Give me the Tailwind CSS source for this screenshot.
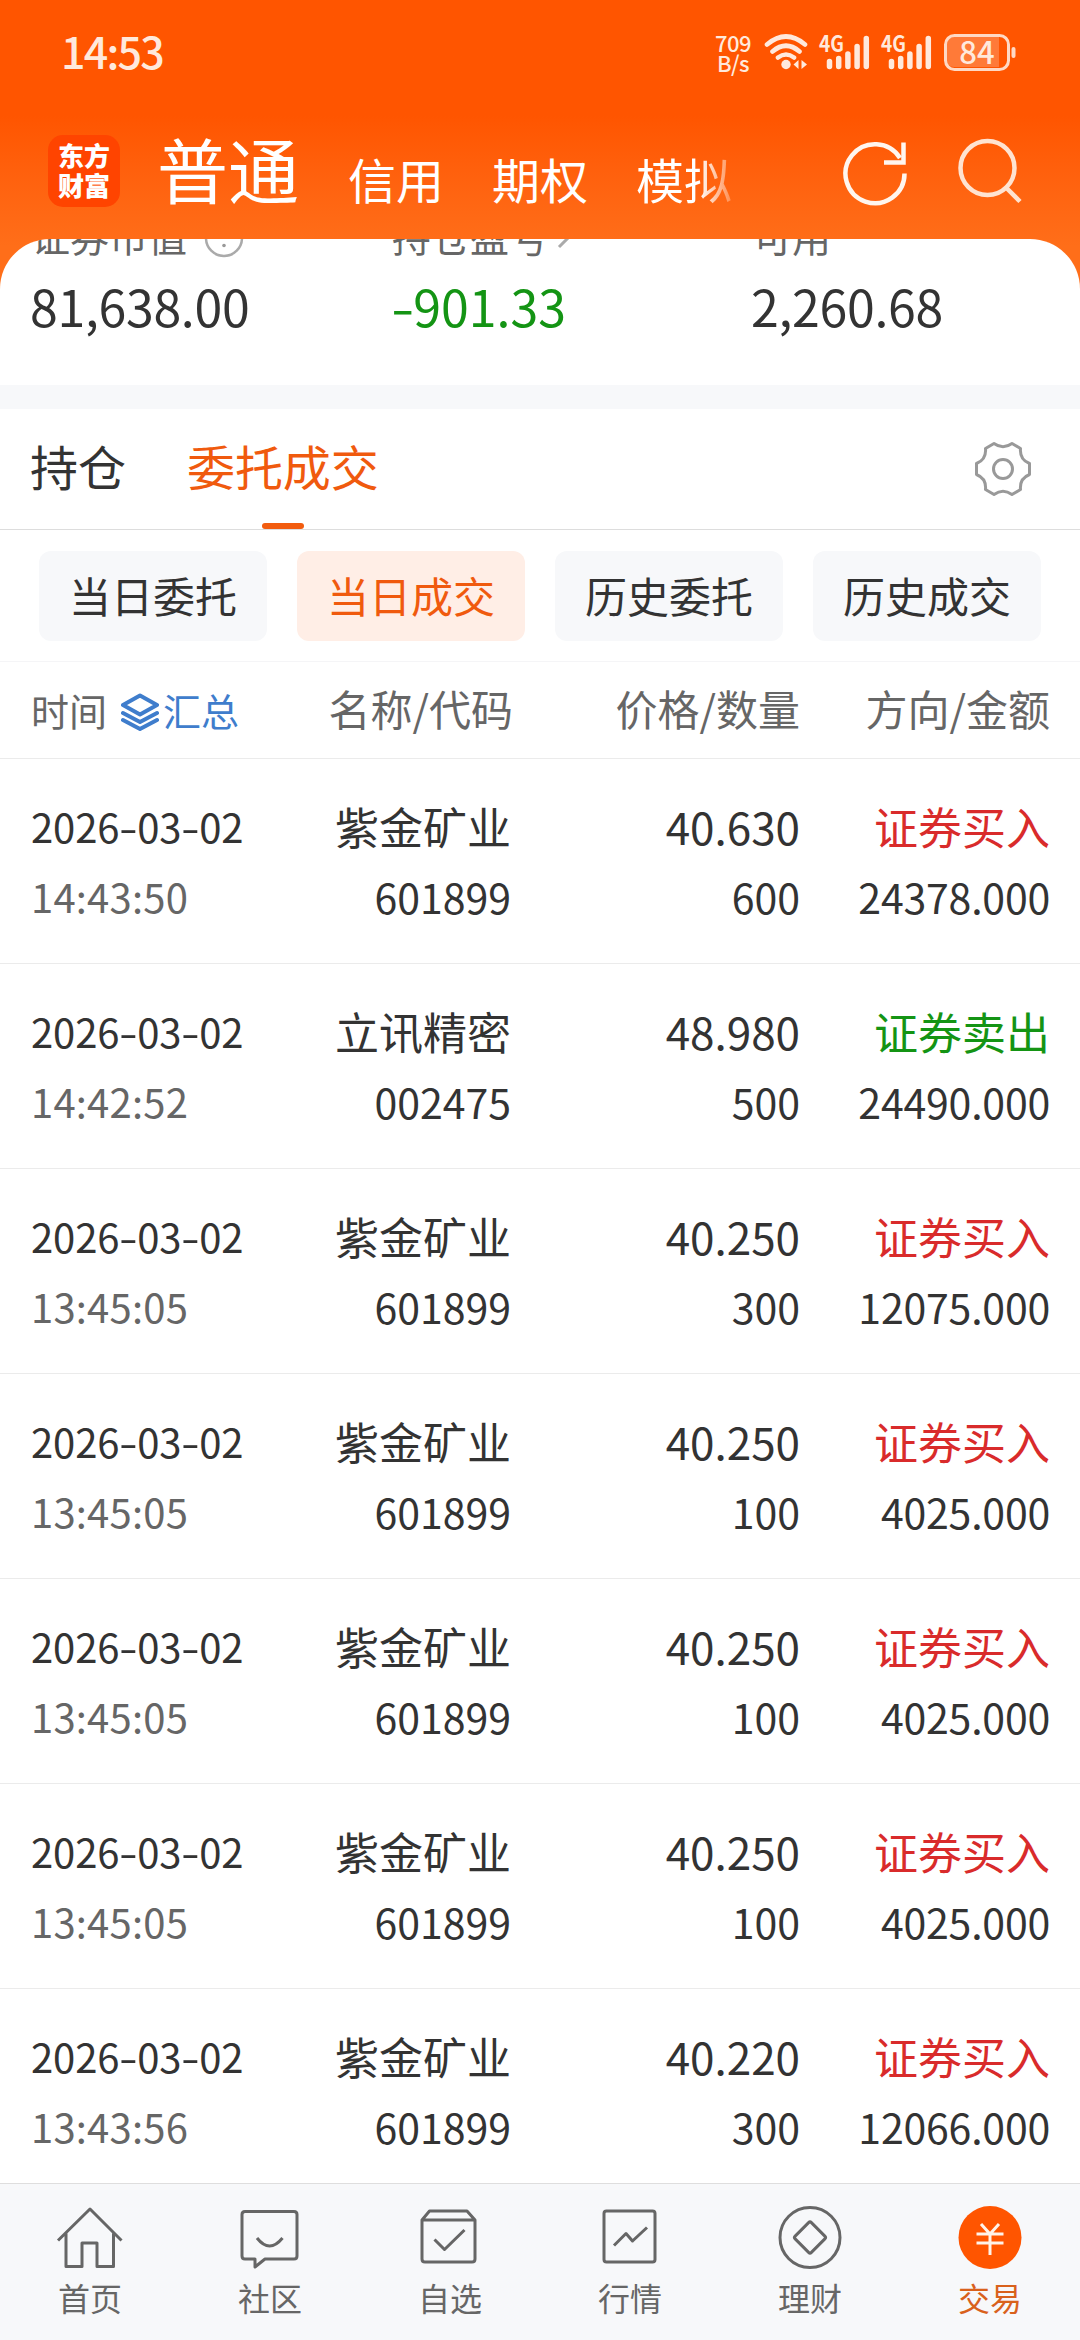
<!DOCTYPE html>
<html lang="zh-CN">
<head>
    <meta charset="UTF-8">
    <meta name="viewport" content="width=device-width, initial-scale=1.0">
    <title>当日成交</title>
    <script src="https://cdn.jsdelivr.net/npm/@tailwindcss/browser@4"></script>
</head>
<body class="w-[1080px] h-[2340px] overflow-hidden flex flex-col bg-white text-[#333333] font-['Noto_Sans_CJK_SC',sans-serif]">
    <!-- Status bar + account tabs -->
    <header class="h-[290px] shrink-0 bg-linear-to-b from-[#ff5500] from-40% to-[#ff6e19] to-85%">
        <div class="h-[106px] flex items-center justify-between pl-[61px] pr-[63px] text-[#ffe9dc]">
            <div class="-mt-[5px] text-[43px] font-medium leading-none tracking-[-1.8px]">14:53</div>
            <div class="-mt-[2px] flex items-center">
                <div class="w-[38px] text-center text-[22px] font-medium leading-[20px] tracking-[-0.6px]">
                    <div>709</div>
                    <div>B/s</div>
                </div>
                <svg class="ml-[12px]" width="44" height="38" viewBox="0 0 44 38" fill="none" stroke="#ffe9dc" stroke-width="4.6" stroke-linecap="round">
                    <path d="M3 11.5Q22 -4.500 41 11.500M8.500 18.500Q22 7 35.500 18.500M14 24.500Q22 18.500 30 24.500"/>
                    <circle cx="22" cy="31.500" r="4.700" fill="#ffe9dc" stroke="none"/>
                    <path d="M34.500 27v9l-5-4.500zM37.500 27v9l5.500-4.500z" fill="#ffe9dc" stroke="none"/>
                </svg>
                <svg class="ml-[11px] overflow-visible" width="52" height="38" viewBox="0 0 52 38" fill="#ffe9dc">
                    <text x="0" y="18.500" font-size="22" font-weight="700" textLength="25" lengthAdjust="spacingAndGlyphs">4G</text>
                    <path d="M10.500 28.500v5M19.700 25.500v8M28.900 21v12.500M38.100 13.500v20M47.300 5.500v28" stroke="#ffe9dc" stroke-width="5.500" stroke-linecap="round"/>
                </svg>
                <svg class="ml-[10px] overflow-visible" width="52" height="38" viewBox="0 0 52 38" fill="#ffe9dc">
                    <text x="0" y="18.500" font-size="22" font-weight="700" textLength="25" lengthAdjust="spacingAndGlyphs">4G</text>
                    <path d="M10.500 28.500v5M19.700 25.500v8M28.900 21v12.500M38.100 13.500v20M47.300 5.500v28" stroke="#ffe9dc" stroke-width="5.500" stroke-linecap="round"/>
                </svg>
                <svg class="ml-[9px] overflow-visible" width="75" height="38" viewBox="0 0 75 38">
                    <path d="M12 4h45v30h-45a8 8 0 0 1-8-8v-14a8 8 0 0 1 8-8z" fill="#ff7a38"/>
                    <rect x="3.500" y="2.500" width="63" height="34" rx="9" fill="none" stroke="#ffd9c4" stroke-width="3"/>
                    <path d="M71.500 16v7" stroke="#ffd9c4" stroke-width="4" stroke-linecap="round"/>
                    <text x="35" y="31" font-size="31" font-weight="500" text-anchor="middle" fill="#ffe9dc">84</text>
                </svg>
            </div>
        </div>
        <div class="h-[132px] flex items-start pl-[48px] text-white">
            <div class="mt-[29px] size-[72px] rounded-[15px] bg-[#ff4400] flex flex-col items-center justify-center pb-[2px] font-black text-[26px] leading-[30px]">
                <div>东方</div>
                <div>财富</div>
            </div>
            <div class="ml-[37px] mt-[21px] text-[71px] leading-[80px]">普通</div>
            <div class="ml-[49px] mt-[44px] flex gap-[48px] text-[48px] leading-[56px]">
                <div>信用</div>
                <div>期权</div>
                <div class="bg-linear-to-r from-white from-65% to-[#ff8b4a] bg-clip-text text-transparent">模拟</div>
            </div>
            <svg class="ml-[110px] mt-[32px]" width="68" height="68" viewBox="0 0 68 68" fill="none" stroke="#fff6ef" stroke-width="4.500">
                <path d="M62.500 35.500A29.500 29.500 0 1 1 58 20"/>
                <path d="M61.500 4.500V24.500H42"/>
            </svg>
            <svg class="ml-[46px] mt-[32px]" width="68" height="68" viewBox="0 0 68 68" fill="none" stroke="#ffe3d1" stroke-width="4.500">
                <circle cx="31.500" cy="30" r="27"/>
                <path d="M50.500 50L64 63.500"/>
            </svg>
        </div>
    </header>

    <!-- Asset summary, scrolled under the header -->
    <section class="relative z-10 -mt-[51px] h-[146px] shrink-0 overflow-hidden rounded-t-[50px] bg-white">
        <div class="-mt-[29px] grid grid-cols-[361px_361px_1fr] pl-[31px] text-[39px] leading-[50px] text-[#666666]">
            <div class="flex items-center">
                <span>证券市值</span>
                <svg class="ml-[17px] mt-[5px]" width="40" height="40" viewBox="0 0 40 40" fill="none" stroke="#aaaaaa" stroke-width="2.500">
                    <circle cx="20" cy="20" r="18"/>
                    <path d="M20 9v12" stroke-width="3"/>
                    <circle cx="20" cy="27.500" r="1.800" fill="#999999" stroke="none"/>
                </svg>
            </div>
            <div class="flex items-center">
                <span>持仓盈亏</span>
                <svg class="ml-[9px]" width="16" height="30" viewBox="0 0 16 30" fill="none" stroke="#aaaaaa" stroke-width="3">
                    <path d="M2 3l12 12L2 27"/>
                </svg>
            </div>
            <div>可用</div>
        </div>
        <div class="mt-[15px] grid grid-cols-[361px_361px_1fr] pl-[30px] text-[50px] leading-[60px]">
            <div class="tracking-[-0.3px]">81,638.00</div>
            <div class="text-[#149414]"><span class="mr-[5px] inline-block origin-left scale-x-135">-</span>901.33</div>
            <div class="-ml-[1px] tracking-[-0.3px]">2,260.68</div>
        </div>
    </section>
    <div class="h-[24px] shrink-0 bg-[#f7f8fa]"></div>

    <!-- Section tabs -->
    <nav class="h-[121px] shrink-0 flex items-stretch border-b border-[#dddddd] pl-[30px] pr-[49px] text-[48px] leading-[113px]">
        <div>持仓</div>
        <div class="relative ml-[61px] text-[#f05a0e] tracking-[-0.1px]">
            委托成交
            <div class="absolute bottom-0 left-[75px] h-[6px] w-[42px] rounded-full bg-[#f25c0f]"></div>
        </div>
        <svg class="ml-auto mt-[32px]" width="56" height="56" viewBox="0 0 56 56" fill="none" stroke="#999999" stroke-width="3" stroke-linejoin="round">
            <path d="M19 2.500Q28 9 37 2.500L45.500 7.500Q44.500 18.500 54.500 22.500V33.500Q44.500 37.500 45.500 48.500L37 53.500Q28 47 19 53.500L10.500 48.500Q11.500 37.500 1.500 33.500V22.500Q11.500 18.500 10.500 7.500Z"/>
            <circle cx="28" cy="28" r="9.500"/>
        </svg>
    </nav>

    <!-- Filter buttons -->
    <div class="h-[132px] shrink-0 flex gap-[30px] border-b border-[#f5f5f7] px-[39px] pt-[21px] text-center text-[42px] leading-[87px]">
        <div class="h-[90px] w-[228px] rounded-xl bg-[#f7f8fa]">当日委托</div>
        <div class="h-[90px] w-[228px] rounded-xl bg-[#ffeee6] text-[#f05a0e]">当日成交</div>
        <div class="h-[90px] w-[228px] rounded-xl bg-[#f7f8fa]">历史委托</div>
        <div class="h-[90px] w-[228px] rounded-xl bg-[#f7f8fa]">历史成交</div>
    </div>

    <!-- Table head -->
    <div class="h-[97px] shrink-0 grid grid-cols-[212px_270px_287px_250px] border-b border-[#ebebeb] pl-[31px] text-right text-[42px] leading-[92px] text-[#666666]">
        <div class="flex items-center whitespace-nowrap text-[38px]">
            <span>时间</span>
            <svg class="ml-[14px] mt-[4px]" width="38" height="38" viewBox="0 0 38 38" fill="none" stroke="#3f7dcc" stroke-width="4" stroke-linejoin="round" stroke-linecap="round">
                <path d="M19 2.500L36 12L19 21.500L2 12ZM2 20L19 29L36 20M2 27L19 36L36 27"/>
            </svg>
            <span class="ml-[4px] text-[#3f7dcc]">汇总</span>
        </div>
        <div>名称/代码</div>
        <div>价格/数量</div>
        <div>方向/金额</div>
    </div>

    <!-- Trade rows -->
    <main id="trades" class="min-h-0 flex-1 overflow-hidden"></main>

    <!-- Bottom bar -->
    <footer class="h-[157px] shrink-0 grid grid-cols-6 border-t border-[#dedede] bg-[#f7f8fa] pt-[20px] text-center text-[32px] leading-[36px] text-[#666666]">
        <div class="flex flex-col items-center">
            <svg width="68" height="68" viewBox="0 0 68 68" fill="none" stroke="#666666" stroke-width="3" stroke-linejoin="round">
                <path d="M2 36.500L34 5L65.500 36.500M10 29.500V62.500H26V39H41V62.500H57.500V29.500"/>
            </svg>
            <div class="mt-[7px]">首页</div>
        </div>
        <div class="flex flex-col items-center">
            <svg width="68" height="68" viewBox="0 0 68 68" fill="none" stroke="#666666" stroke-width="3" stroke-linejoin="round">
                <path d="M9 7.500H58Q61 7.500 61 10.500V52Q61 55 58 55H29L19 63V55H9Q6 55 6 52V10.500Q6 7.500 9 7.500Z"/>
                <path d="M21 34Q33.500 50 46.500 34"/>
            </svg>
            <div class="mt-[7px]">社区</div>
        </div>
        <div class="flex flex-col items-center">
            <svg width="68" height="68" viewBox="0 0 68 68" fill="none" stroke="#666666" stroke-width="3" stroke-linejoin="round">
                <path d="M6 16L13.500 7H51L59 16V55Q59 58 56 58H9Q6 58 6 55ZM6 16H59"/>
                <path d="M18.500 35.500L28.500 45.500L48.500 26"/>
            </svg>
            <div class="mt-[7px]">自选</div>
        </div>
        <div class="flex flex-col items-center">
            <svg width="68" height="68" viewBox="0 0 68 68" fill="none" stroke="#666666" stroke-width="3" stroke-linejoin="round">
                <rect x="8" y="7" width="51" height="51" rx="2.500"/>
                <path d="M18 41.500L30 29.500L36.500 37L51 23.500"/>
            </svg>
            <div class="mt-[7px]">行情</div>
        </div>
        <div class="flex flex-col items-center">
            <svg width="68" height="68" viewBox="0 0 68 68" fill="none" stroke="#666666" stroke-width="3" stroke-linejoin="round">
                <circle cx="34" cy="33.500" r="30"/>
                <rect x="22.500" y="22" width="23" height="23" rx="2" transform="rotate(45 34 33.500)"/>
            </svg>
            <div class="mt-[7px]">理财</div>
        </div>
        <div class="flex flex-col items-center text-[#d9611c]">
            <svg width="68" height="68" viewBox="0 0 68 68" fill="none" stroke="#fff3ea" stroke-width="3">
                <circle cx="34" cy="33.500" r="31.500" fill="#ff5500" stroke="none"/>
                <path d="M25 20L34 30L43 20M20.500 30H47.500M20.500 39H47.500M34 30V51"/>
            </svg>
            <div class="mt-[7px]">交易</div>
        </div>
    </footer>

    <script>
        const trades = [
            ['14:43:50', '紫金矿业', '601899', '40.630', '600', '证券买入', '24378.000'],
            ['14:42:52', '立讯精密', '002475', '48.980', '500', '证券卖出', '24490.000'],
            ['13:45:05', '紫金矿业', '601899', '40.250', '300', '证券买入', '12075.000'],
            ['13:45:05', '紫金矿业', '601899', '40.250', '100', '证券买入', '4025.000'],
            ['13:45:05', '紫金矿业', '601899', '40.250', '100', '证券买入', '4025.000'],
            ['13:45:05', '紫金矿业', '601899', '40.250', '100', '证券买入', '4025.000'],
            ['13:43:56', '紫金矿业', '601899', '40.220', '300', '证券买入', '12066.000']
        ];
        const dash = '<span class="mr-[4px] inline-block origin-left scale-x-135">-</span>';

        document.getElementById('trades').innerHTML = trades.map(([time, name, code, price, count, side, amount]) => `
            <div class="h-[205px] grid grid-cols-[212px_268px_289px_250px] border-b border-[#ebebeb] pl-[31px] pt-[32px] text-right text-[41px] leading-[70px]">
                <div class="text-left text-[40px] whitespace-nowrap">
                    <div class="tracking-[-0.1px]">2026${dash}03${dash}02</div>
                    <div class="tracking-[0.2px] text-[#666666]">${time}</div>
                </div>
                <div>
                    <div class="h-[70px] text-[44px]">${name}</div>
                    <div>${code}</div>
                </div>
                <div>
                    <div class="h-[70px] text-[44px]">${price}</div>
                    <div>${count}</div>
                </div>
                <div>
                    <div class="h-[70px] text-[44px] ${side === '证券买入' ? 'text-[#d92b2b]' : 'text-[#149414]'}">${side}</div>
                    <div class="tracking-[-0.2px]">${amount}</div>
                </div>
            </div>`).join('');
    </script>
</body>
</html>
